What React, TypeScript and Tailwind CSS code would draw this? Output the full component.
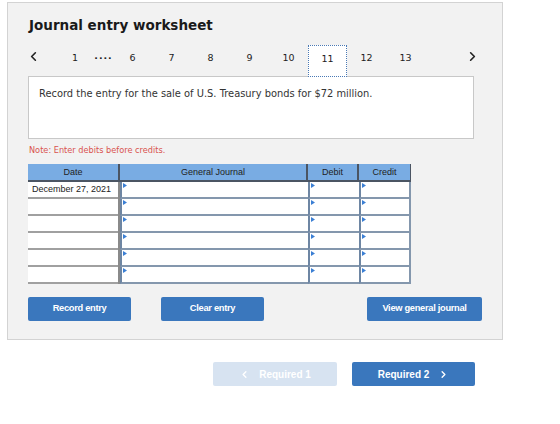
import { ChevronLeft, ChevronRight } from 'lucide-react';

const pages = ['6', '7', '8', '9', '10', '11', '12', '13'];

function Marker() {
  // little blue flag in the corner of each input cell
  return (
    <svg width="4" height="5" viewBox="0 0 4 5" className="absolute left-[1px] top-[1px]">
      <polygon points="0,0 4,2.5 0,5" fill="#3b7fd4" />
    </svg>
  );
}

function InputCell({ w }: { w: string }) {
  return (
    <div className={`relative h-full ${w} bg-white border-l-[2px] border-l-[#6e86a3] border-b-[2px] border-b-[#8497ad]`}>
      <Marker />
    </div>
  );
}

export default function App() {
  const rows = ['December 27, 2021', '', '', '', '', ''];

  return (
    <div className="min-h-[424px] w-[560px] bg-white pt-[2px] pl-[7px]" style={{ fontFamily: '"DejaVu Sans", Verdana, sans-serif' }}>
      {/* Worksheet panel */}
      <div className="w-[496px] h-[338px] bg-[#f2f2f2] border border-[#d3d3d3] pl-[20px] pt-[14px]">
        <h1 className="text-[13.5px] font-bold text-[#1a1a1a] leading-[16px] pl-[1px]">Journal entry worksheet</h1>

        {/* Pagination */}
        <div className="flex items-start w-[452px] h-[32px] mt-[12px] text-[9.5px] text-[#222]">
          <div className="w-[28px] h-[32px] flex items-start pt-[4px]">
            <ChevronLeft className="w-[15px] h-[15px] -ml-[2px]" strokeWidth={2.6} color="#222" />
          </div>
          <div className="w-[38px] h-[32px] flex justify-center pt-[6px]">1</div>
          <div className="w-[19px] h-[32px] flex justify-center pt-[4px] font-bold tracking-[1px]">....</div>
          {pages.map((p) =>
            p === '11' ? (
              <div key={p} className="w-[39px] h-[32px] flex justify-center pt-[6px] bg-white border border-dotted border-[#4a79b5]">
                {p}
              </div>
            ) : (
              <div key={p} className="w-[39px] h-[32px] flex justify-center pt-[6px]">
                {p}
              </div>
            )
          )}
          <div className="flex-1" />
          <div className="h-[32px] pt-[4px]">
            <ChevronRight className="w-[15px] h-[15px]" strokeWidth={2.6} color="#222" />
          </div>
        </div>

        {/* Question */}
        <div className="w-[446px] h-[63px] -mt-[1px] bg-white border border-[#c8c8c8] pl-[10px] pt-[10px] text-[9.9px] text-[#333]">
          Record the entry for the sale of U.S. Treasury bonds for $72 million.
        </div>

        <p className="mt-[5px] text-[8.2px] text-[#d9534f] pl-[1px]">Note: Enter debits before credits.</p>

        {/* Journal table */}
        <div className="mt-[8px] w-[383px] text-[9px] text-[#222]" style={{ fontFamily: '"Liberation Sans", Arial, sans-serif' }}>
          <div className="flex h-[18px] bg-[#79ace3] border-b-[2px] border-[#4b5563]">
            <div className="w-[92px] flex items-center justify-center border-r-[2px] border-[#4b5563]">Date</div>
            <div className="w-[188px] flex items-center justify-center border-r-[2px] border-[#4b5563]">General Journal</div>
            <div className="w-[51px] flex items-center justify-center border-r-[2px] border-[#4b5563]">Debit</div>
            <div className="w-[52px] flex items-center justify-center border-r-[1px] border-[#4b5563]">Credit</div>
          </div>
          {rows.map((d, i) => (
            <div key={i} className="flex h-[17px]">
              <div className="w-[90px] h-full bg-white border-b-[2px] border-[#a0a0a0] flex items-center pl-[4px] whitespace-nowrap">{d}</div>
              <div className="w-[2px] h-full bg-[#8a8a8a]" />
              <InputCell w="w-[188px]" />
              <InputCell w="w-[51px]" />
              <div className="relative h-full w-[52px] bg-white border-l-[2px] border-l-[#6e86a3] border-b-[2px] border-b-[#8497ad] border-r-[2px] border-r-[#8497ad]">
                <Marker />
              </div>
            </div>
          ))}
        </div>

        {/* Actions */}
        <div className="flex mt-[13px] w-[454px] text-[9.3px] font-bold text-white tracking-[-0.3px]" style={{ fontFamily: '"Liberation Sans", Arial, sans-serif' }}>
          <button className="w-[103px] h-[24px] bg-[#3a77bd] rounded-[2px]">Record entry</button>
          <button className="w-[103px] h-[24px] bg-[#3a77bd] rounded-[2px] ml-[30px]">Clear entry</button>
          <div className="flex-1" />
          <button className="w-[115px] h-[24px] bg-[#3a77bd] rounded-[2px]">View general journal</button>
        </div>
      </div>

      {/* Requirement navigation */}
      <div className="flex mt-[22px] pl-[206px] gap-[15px] text-[10px] font-bold text-white" style={{ fontFamily: '"Liberation Sans", Arial, sans-serif' }}>
        <button className="w-[124px] h-[24px] bg-[#d7e3f1] rounded-[2px] flex items-center justify-center gap-[9px]">
          <ChevronLeft className="w-[11px] h-[11px]" strokeWidth={3} />
          <span>Required 1</span>
        </button>
        <button className="w-[123px] h-[24px] bg-[#3a77bd] rounded-[2px] flex items-center justify-center gap-[9px]">
          <span>Required 2</span>
          <ChevronRight className="w-[11px] h-[11px]" strokeWidth={3} />
        </button>
      </div>
    </div>
  );
}
